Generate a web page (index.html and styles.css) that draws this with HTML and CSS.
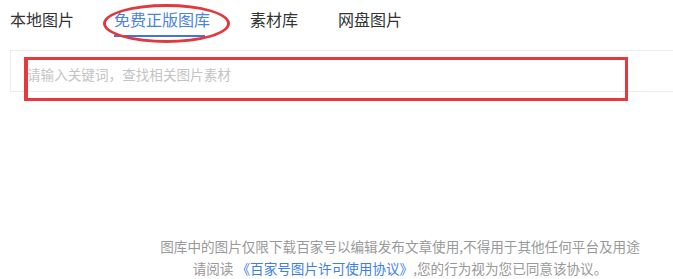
FILE: index.html
```html
<!DOCTYPE html>
<html lang="zh-CN">
<head>
<meta charset="utf-8">
<link rel="stylesheet" href="styles.css">
</head>
<body>
<div class="page">
  <nav class="tabs">
    <span class="tab">本地图片</span>
    <span class="tab active">免费正版图库</span>
    <span class="tab">素材库</span>
    <span class="tab">网盘图片</span>
  </nav>
  <div class="search">
    <span class="placeholder">请输入关键词，查找相关图片素材</span>
  </div>
  <div class="footer">
    <p>图库中的图片仅限下载百家号以编辑发布文章使用,不得用于其他任何平台及用途</p>
    <p>请阅读 <a class="link">《百家号图片许可使用协议》</a>,您的行为视为您已同意该协议。</p>
  </div>
  <div class="mark-ellipse"></div>
  <div class="mark-rect"></div>
</div>
</body>
</html>
```
FILE: styles.css
```css
html, body {
  margin: 0;
  padding: 0;
  background: #fff;
  overflow: hidden;
}
.page {
  position: relative;
  width: 100%;
  height: 279px;
  font-family: "Noto Sans CJK SC", "Microsoft YaHei", sans-serif;
  padding-left: 10px;
  box-sizing: border-box;
}
.tabs {
  display: flex;
  gap: 40px;
  padding-top: 7px;
  height: 43px;
  box-sizing: border-box;
}
.tab {
  position: relative;
  font-size: 16px;
  line-height: 24px;
  color: #333;
}
.tab.active {
  color: #4a82e4;
}
.tab.active::after {
  content: "";
  position: absolute;
  left: 0;
  top: 28px;
  width: 91px;
  height: 2px;
  background: #3d74e6;
}
.search {
  margin-top: 7px;
  height: 42px;
  border: 1px solid #ececec;
  border-right: none;
  box-sizing: border-box;
  padding: 10px 0 0 16px;
}
.placeholder {
  font-size: 13.6px;
  line-height: 20px;
  color: #c4c4c4;
}
.footer {
  margin-top: 143px;
  margin-left: 117px;
  text-align: center;
  font-size: 13.6px;
  line-height: 22px;
  color: #999;
}
.footer p {
  margin: 0;
}
.link {
  color: #3e7ee6;
}
.mark-ellipse {
  position: absolute;
  left: 103px;
  top: 4px;
  width: 127px;
  height: 39px;
  border: 3px solid #e0393e;
  border-radius: 50%;
  box-sizing: border-box;
}
.mark-rect {
  position: absolute;
  left: 24px;
  top: 57px;
  width: 604px;
  height: 44px;
  border: 3px solid #e8383d;
  border-left-width: 4px;
  box-sizing: border-box;
}
```
